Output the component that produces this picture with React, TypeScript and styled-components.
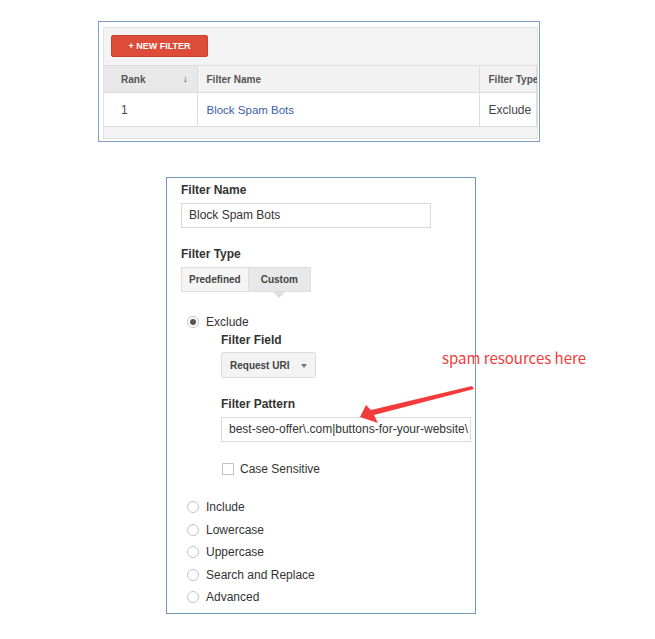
import React from 'react'
import styled, { createGlobalStyle } from 'styled-components'

const GlobalStyle = createGlobalStyle`
  html, body {
    margin: 0;
    padding: 0;
    background: #ffffff;
  }

  body {
    font-family: 'Liberation Sans', Arial, sans-serif;
    color: #333333;
  }
`

const OTHER_TYPES = ['Include', 'Lowercase', 'Uppercase', 'Search and Replace', 'Advanced']

function App() {
  return (
    <Page>
      <GlobalStyle />
      <ListFrame>
        <ListPanel>
          <NewFilterButton>+ NEW FILTER</NewFilterButton>
          <FilterTable>
            <thead>
              <tr>
                <HeadCell sorted width={93}>
                  <RankHead>
                    Rank <SortArrow>↓</SortArrow>
                  </RankHead>
                </HeadCell>
                <HeadCell width={282}>Filter Name</HeadCell>
                <HeadCell>Filter Type</HeadCell>
              </tr>
            </thead>
            <tbody>
              <tr>
                <BodyCell>1</BodyCell>
                <BodyCell>
                  <FilterLink>Block Spam Bots</FilterLink>
                </BodyCell>
                <BodyCell>Exclude</BodyCell>
              </tr>
            </tbody>
          </FilterTable>
        </ListPanel>
      </ListFrame>

      <EditFrame>
        <Label>Filter Name</Label>
        <TextBox width={250}>Block Spam Bots</TextBox>

        <Label gap={18}>Filter Type</Label>
        <Tabs>
          <Tab>Predefined</Tab>
          <Tab active>Custom</Tab>
        </Tabs>

        <RadioRow gap={22} height={16}>
          <Radio checked />
          Exclude
        </RadioRow>
        <Nested>
          <Label gap={2}>Filter Field</Label>
          <Select>
            Request URI <Caret />
          </Select>
          <Label gap={18}>Filter Pattern</Label>
          <TextBox width={250}>best-seo-offer\.com|buttons-for-your-website\</TextBox>
          <CheckRow>
            <CheckBox />
            Case Sensitive
          </CheckRow>
        </Nested>

        <RadioList>
          {OTHER_TYPES.map((name) => (
            <RadioRow key={name} height={22.5}>
              <Radio />
              {name}
            </RadioRow>
          ))}
        </RadioList>
      </EditFrame>

      <Note>spam resources here</Note>
      <NoteArrow width="130" height="45" viewBox="0 0 130 45">
        <polygon points="122,6 124,9 24,35 28,43 10,37 16,25 21,30" fill="#f33b3b" />
      </NoteArrow>
    </Page>
  )
}

export default App

const Page = styled.div`
  position: relative;
  width: 655px;
  height: 639px;
  padding-top: 21px;
  box-sizing: border-box;
`

const ListFrame = styled.div`
  margin-left: 98px;
  width: 442px;
  height: 121px;
  box-sizing: border-box;
  border: 1px solid #7d9fc0;
  padding: 5px 1px 2px 4px;
  background: #ffffff;
`

const ListPanel = styled.div`
  height: 100%;
  box-sizing: border-box;
  background: #f4f4f4;
  border: 1px solid #e2e2e2;
  padding-top: 7px;
  overflow: hidden;
`

const NewFilterButton = styled.div`
  margin-left: 7px;
  width: 97px;
  height: 22px;
  box-sizing: border-box;
  background: #dd4b39;
  border: 1px solid #c8402f;
  border-radius: 2px;
  color: #ffffff;
  font-size: 9px;
  font-weight: bold;
  line-height: 20px;
  text-align: center;
`

const FilterTable = styled.table`
  margin-top: 8px;
  width: 100%;
  border-collapse: collapse;
  table-layout: fixed;
`

const HeadCell = styled.th<{ sorted?: boolean; width?: number }>`
  width: ${({ width }) => (width ? `${width}px` : 'auto')};
  height: 27px;
  padding: 0 9px;
  box-sizing: border-box;
  background: ${({ sorted }) => (sorted ? '#e8e8e8' : '#f2f2f2')};
  border: 1px solid #dcdcdc;
  border-left: none;
  color: #555555;
  font-size: 10px;
  font-weight: bold;
  text-align: left;
  white-space: nowrap;

  &:first-child {
    padding-left: 17px;
  }
`

const RankHead = styled.div`
  display: flex;
  justify-content: space-between;
`

const SortArrow = styled.span`
  font-size: 9px;
  font-weight: bold;
  color: #222222;
`

const BodyCell = styled.td`
  height: 33px;
  padding: 0 9px;
  background: #ffffff;
  border: 1px solid #dcdcdc;
  border-left: none;
  color: #444444;
  font-size: 12px;
  white-space: nowrap;

  &:first-child {
    padding-left: 17px;
  }
`

const FilterLink = styled.span`
  color: #3b5ea9;
  font-size: 11.5px;
`

const EditFrame = styled.div`
  margin: 35px 0 0 166px;
  width: 310px;
  height: 437px;
  box-sizing: border-box;
  border: 1px solid #7197bb;
  padding: 4px 14px 0 14px;
`

const Label = styled.div<{ gap?: number }>`
  margin-top: ${({ gap }) => gap || 0}px;
  font-size: 12px;
  font-weight: bold;
  line-height: 16px;
  color: #333333;
`

const TextBox = styled.div<{ width: number }>`
  margin-top: 5px;
  width: ${({ width }) => width}px;
  height: 25px;
  box-sizing: border-box;
  border: 1px solid #d9d9d9;
  padding: 0 7px;
  font-size: 12px;
  line-height: 23px;
  color: #333333;
  white-space: nowrap;
  overflow: hidden;
`

const Tabs = styled.div`
  margin-top: 5px;
  display: flex;
`

const Tab = styled.div<{ active?: boolean }>`
  position: relative;
  height: 25px;
  box-sizing: border-box;
  padding: 0 ${({ active }) => (active ? 12 : 7)}px;
  background: ${({ active }) => (active ? '#e8e8e8' : '#f5f5f5')};
  border: 1px solid #dddddd;
  border-left-width: ${({ active }) => (active ? 0 : 1)}px;
  font-size: 10px;
  font-weight: bold;
  line-height: 23px;
  color: #444444;

  &::after {
    content: '';
    display: ${({ active }) => (active ? 'block' : 'none')};
    position: absolute;
    left: 50%;
    bottom: -7px;
    margin-left: -6px;
    border-left: 6px solid transparent;
    border-right: 6px solid transparent;
    border-top: 6px solid #e0e0e0;
  }
`

const RadioRow = styled.div<{ gap?: number; height: number }>`
  margin-top: ${({ gap }) => gap || 0}px;
  height: ${({ height }) => height}px;
  display: flex;
  align-items: center;
  gap: 7px;
  padding-left: 6px;
  font-size: 12px;
  color: #333333;
`

const Radio = styled.span<{ checked?: boolean }>`
  width: 12px;
  height: 12px;
  box-sizing: border-box;
  border: 1px solid #c4c4c4;
  border-radius: 50%;
  background: #ffffff;
  display: flex;
  align-items: center;
  justify-content: center;

  &::after {
    content: '';
    display: ${({ checked }) => (checked ? 'block' : 'none')};
    width: 6px;
    height: 6px;
    border-radius: 50%;
    background: #555555;
  }
`

const Nested = styled.div`
  padding-left: 40px;
`

const Select = styled.div`
  margin-top: 4px;
  width: 95px;
  height: 26px;
  box-sizing: border-box;
  background: #f3f3f3;
  border: 1px solid #dcdcdc;
  border-radius: 2px;
  padding: 0 8px;
  display: flex;
  align-items: center;
  justify-content: space-between;
  font-size: 10px;
  font-weight: bold;
  color: #444444;
`

const Caret = styled.span`
  width: 0;
  height: 0;
  margin-top: 2px;
  border-left: 3.5px solid transparent;
  border-right: 3.5px solid transparent;
  border-top: 4px solid #777777;
`

const CheckRow = styled.div`
  margin-top: 19px;
  height: 16px;
  display: flex;
  align-items: center;
  gap: 6px;
  padding-left: 1px;
  font-size: 12px;
  color: #333333;
`

const CheckBox = styled.span`
  width: 12px;
  height: 12px;
  box-sizing: border-box;
  border: 1px solid #c4c4c4;
  background: #ffffff;
`

const RadioList = styled.div`
  margin-top: 19px;
`

const Note = styled.div`
  position: absolute;
  left: 442px;
  top: 347px;
  font-family: 'Noto Sans CJK SC', 'Noto Sans', sans-serif;
  font-size: 15px;
  line-height: 22px;
  color: #f33b3b;
  white-space: nowrap;
`

const NoteArrow = styled.svg`
  position: absolute;
  left: 350px;
  top: 380px;
`
